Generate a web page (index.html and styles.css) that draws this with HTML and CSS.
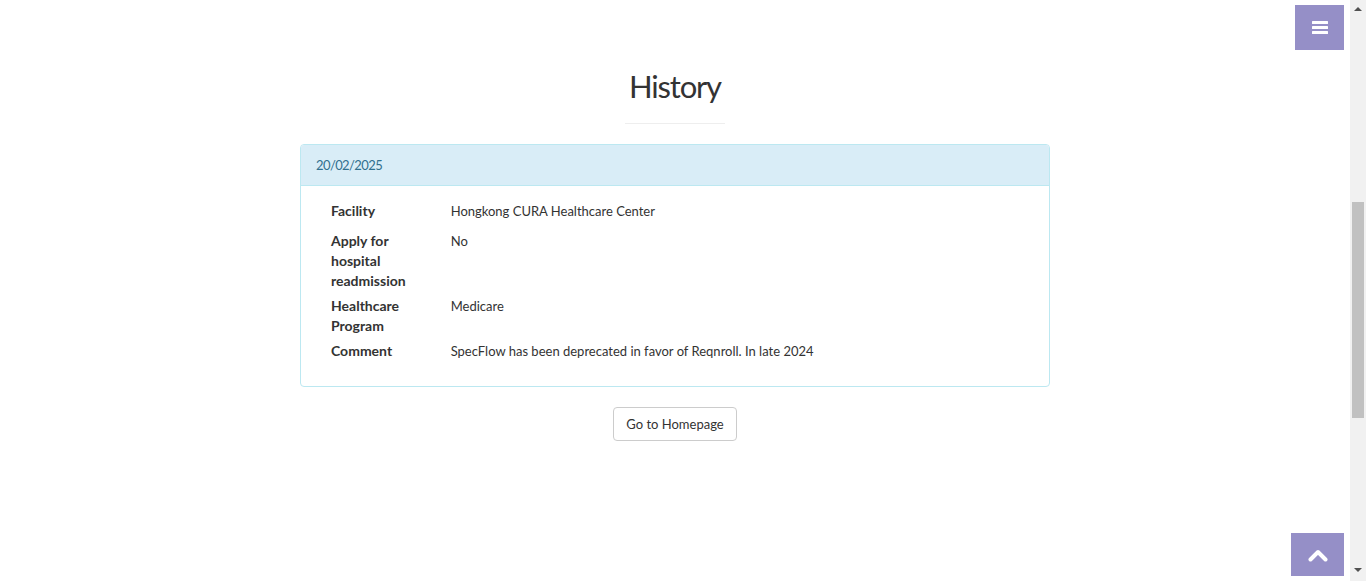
FILE: index.html
```
<!DOCTYPE html>
<html lang="en">
<head>
<meta charset="utf-8">
<title>CURA Healthcare Service - History</title>
<link rel="stylesheet" href="styles.css">
</head>
<body>
<div class="page">
  <section class="history">
    <div class="container">
      <h2 class="title">History</h2>
      <hr class="small-rule">
      <div class="panel">
        <div class="panel-heading"><span class="date">20/02/2025</span></div>
        <div class="panel-body">
          <div class="row">
            <div class="col-label"><label>Facility</label></div>
            <div class="col-value"><p>Hongkong CURA Healthcare Center</p></div>
          </div>
          <div class="row">
            <div class="col-label"><label>Apply for hospital readmission</label></div>
            <div class="col-value"><p>No</p></div>
          </div>
          <div class="row">
            <div class="col-label"><label>Healthcare Program</label></div>
            <div class="col-value"><p>Medicare</p></div>
          </div>
          <div class="row">
            <div class="col-label"><label>Comment</label></div>
            <div class="col-value"><p>SpecFlow has been deprecated in favor of Reqnroll. In late 2024</p></div>
          </div>
        </div>
      </div>
      <div class="actions"><a class="btn" href="#">Go to Homepage</a></div>
    </div>
  </section>
</div>
<a class="menu-toggle" href="#">
  <svg class="bars" width="16" height="14" viewBox="0 0 16 14"><rect x="0" y="0" width="16" height="3" rx="0.5"/><rect x="0" y="5" width="16" height="3" rx="0.5"/><rect x="0" y="10" width="16" height="3" rx="0.5"/></svg>
</a>
<a class="to-top" href="#">
  <svg width="20" height="14" viewBox="0 0 20 14"><polyline points="2.5,11.5 10,4 17.5,11.5" fill="none" stroke="#fff" stroke-width="4" stroke-linecap="round" stroke-linejoin="round"/></svg>
</a>
<div class="scrollbar" aria-hidden="true">
  <svg class="arrow arrow-up" width="8" height="4" viewBox="0 0 8 4"><polygon points="0,4 4,0 8,4"/></svg>
  <div class="thumb"></div>
  <svg class="arrow arrow-down" width="8" height="4" viewBox="0 0 8 4"><polygon points="0,0 8,0 4,4"/></svg>
</div>
</body>
</html>
```
FILE: styles.css
```
html, body {
  margin: 0;
  padding: 0;
  overflow: hidden;
  height: 100%;
}
body {
  font-family: Lato, "Liberation Sans", sans-serif;
  font-size: 13px;
  line-height: 20px;
  color: #333;
  background: #fff;
}
.page {
  margin-right: 16px;
}
.history {
  padding-top: 66px;
}
.container {
  width: 750px;
  margin: 0 auto;
}
.title {
  margin: 0;
  text-align: center;
  font-size: 31px;
  letter-spacing: -1.2px;
  line-height: 40px;
  font-weight: 400;
}
.small-rule {
  width: 100px;
  margin: 17px auto 20px;
  border: 0;
  border-top: 1px solid #eee;
}
.panel {
  border: 1px solid #bce8f1;
  border-radius: 4px;
  margin-bottom: 20px;
  background: #fff;
}
.panel-heading {
  background: #d9edf7;
  color: #31708f;
  padding: 10px 15px;
  border-bottom: 1px solid #bce8f1;
  border-radius: 3px 3px 0 0;
}
.date {
  letter-spacing: -0.6px;
}
.panel-body {
  padding: 15px;
}
.row {
  display: flex;
}
.col-label {
  width: 16.6667%;
  padding: 0 15px;
  box-sizing: border-box;
  flex: none;
}
.col-value {
  flex: 1;
  padding: 0 15px;
}
.col-label label {
  display: block;
  font-size: 14px;
  font-weight: 700;
  margin-bottom: 5px;
}
.col-value p {
  margin: 0 0 10px;
}
.actions {
  text-align: center;
}
.btn {
  display: inline-block;
  padding: 6px 12px;
  border: 1px solid #ccc;
  border-radius: 4px;
  color: #333;
  text-decoration: none;
  background: #fff;
}
.menu-toggle {
  position: fixed;
  top: 5px;
  right: 22px;
  width: 49px;
  height: 45px;
  background: #958fc7;
  display: flex;
  align-items: center;
  justify-content: center;
}
.bars {
  fill: #fff;
  margin-top: 1px;
}
.to-top {
  position: fixed;
  right: 22px;
  bottom: 5px;
  width: 53px;
  height: 43px;
  background: #958fc7;
  display: flex;
  align-items: center;
  justify-content: center;
}
.scrollbar {
  position: fixed;
  top: 0;
  right: 0;
  width: 16px;
  height: 100%;
  background: #f1f1f1;
}
.arrow {
  position: absolute;
  left: 4px;
  fill: #505050;
}
.arrow-up {
  top: 7px;
}
.arrow-down {
  bottom: 9px;
}
.thumb {
  position: absolute;
  top: 202px;
  left: 2px;
  width: 12px;
  height: 216px;
  background: #c1c1c1;
}
```
